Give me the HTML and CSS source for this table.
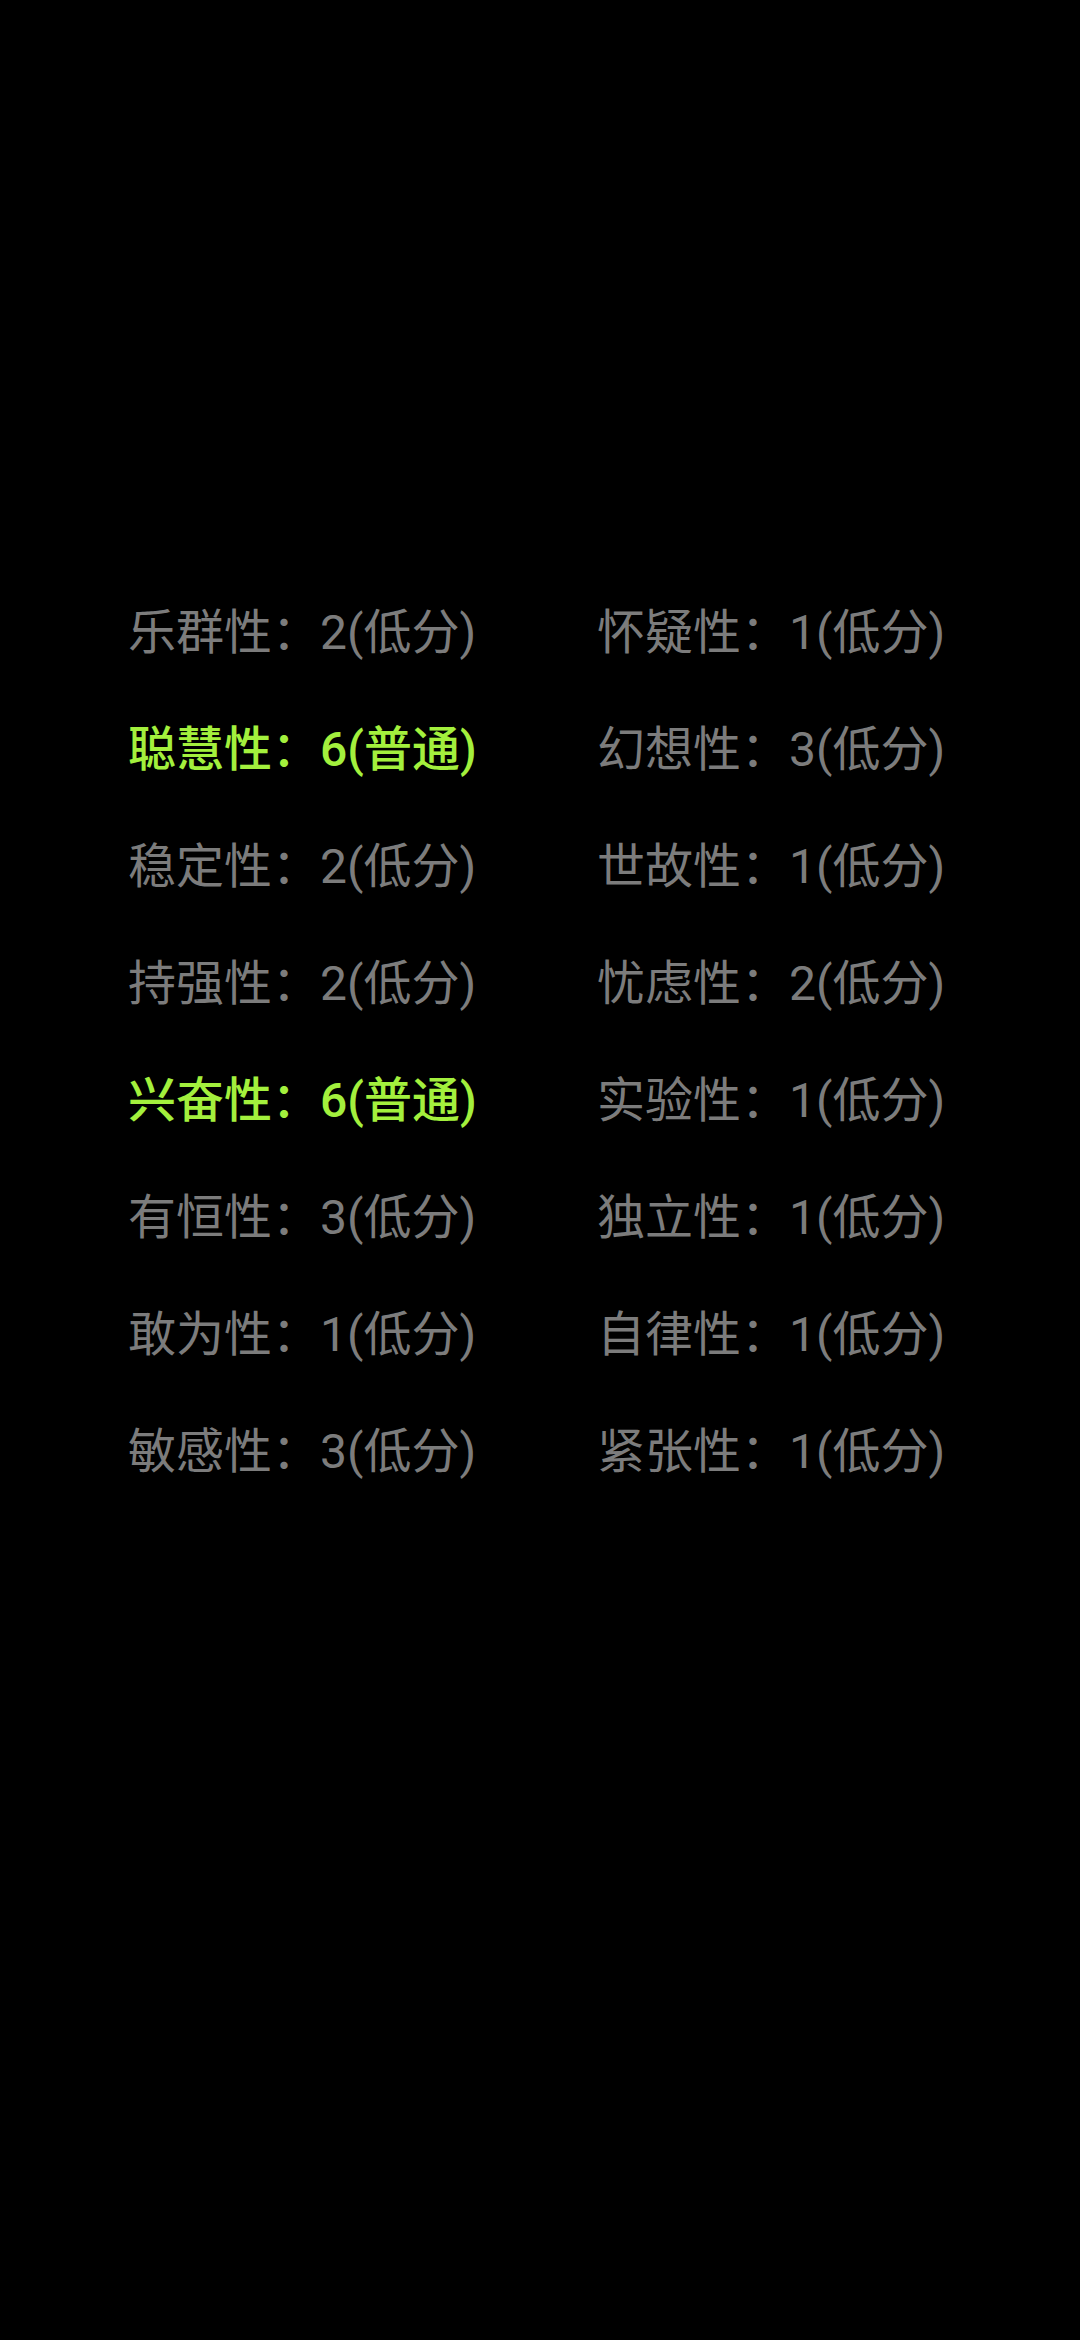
FILE: index.html
```html
<!DOCTYPE html>
<html lang="zh">
<head>
    <meta charset="UTF-8">
    <meta name="viewport" content="width=device-width, initial-scale=1.0">
    <title>16PF 结果</title>
    <link rel="stylesheet" href="styles.css">
</head>
<body>
    <div class="result-grid">
        <div class="trait">乐群性：2(低分)</div>
        <div class="trait">怀疑性：1(低分)</div>

        <div class="trait normal">聪慧性：6(普通)</div>
        <div class="trait">幻想性：3(低分)</div>

        <div class="trait">稳定性：2(低分)</div>
        <div class="trait">世故性：1(低分)</div>

        <div class="trait">持强性：2(低分)</div>
        <div class="trait">忧虑性：2(低分)</div>

        <div class="trait normal">兴奋性：6(普通)</div>
        <div class="trait">实验性：1(低分)</div>

        <div class="trait">有恒性：3(低分)</div>
        <div class="trait">独立性：1(低分)</div>

        <div class="trait">敢为性：1(低分)</div>
        <div class="trait">自律性：1(低分)</div>

        <div class="trait">敏感性：3(低分)</div>
        <div class="trait">紧张性：1(低分)</div>
    </div>
</body>
</html>
```

FILE: styles.css
```css
/* Dark result screen */
body {
    margin: 0;
    min-height: 100vh;
    background-color: #000;
    font-family: Roboto, "Noto Sans CJK SC", sans-serif;
}
.result-grid {
    /* two columns of traits */
    display: grid;
    grid-template-columns: 469px auto;
    padding: 574px 0 0 128px;
}
.trait {
    font-size: 48px;
    line-height: 117px;
    color: #7c7c7c;
    white-space: nowrap;
}
.trait.normal {
    color: #a3f03d;
    font-weight: 500;
}
```
